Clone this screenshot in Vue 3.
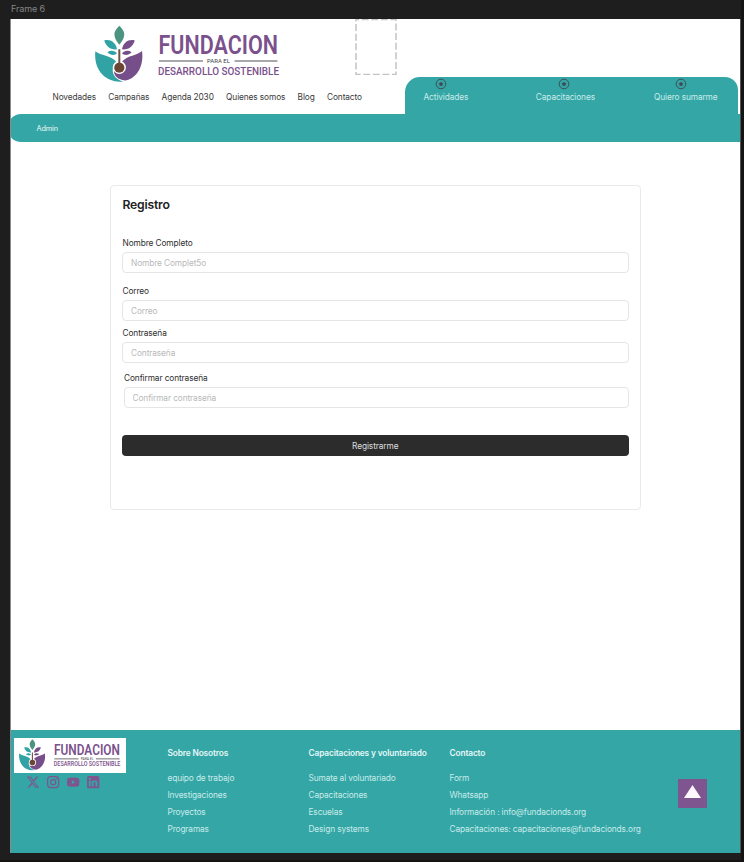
<script setup>
const nav = ['Novedades', 'Campañas', 'Agenda 2030', 'Quienes somos', 'Blog', 'Contacto']
const tabs = ['Actividades', 'Capacitaciones', 'Quiero sumarme']
const fields = [
  { id: 'nombre', label: 'Nombre Completo', hint: 'Nombre Complet5o', type: 'text' },
  { id: 'correo', label: 'Correo', hint: 'Correo', type: 'email' },
  { id: 'clave', label: 'Contraseña', hint: 'Contraseña', type: 'password' },
  { id: 'confirmar', label: 'Confirmar contraseña', hint: 'Confirmar contraseña', type: 'password' },
]
const columns = [
  { title: 'Sobre Nosotros', links: ['equipo de trabajo', 'Investigaciones', 'Proyectos', 'Programas'] },
  { title: 'Capacitaciones y voluntariado', links: ['Sumate al voluntariado', 'Capacitaciones', 'Escuelas', 'Design systems'] },
  { title: 'Contacto', links: ['Form', 'Whatsapp', 'Información : info@fundacionds.org', 'Capacitaciones: capacitaciones@fundacionds.org'] },
]
</script>

<template>
  <div class="canvas">
    <div class="frame-name">Frame 6</div>
    <svg class="defs" width="0" height="0">
      <symbol id="mark" viewBox="30 19 146 173">
        <path fill="#4b9480" d="M104 20C113 29 120 38 119 48C118 61 111 70 104 78C97 70 90 61 89 48C88 38 95 29 104 20Z" />
        <path fill="#31a3a4" d="M58 65C76 60 93 70 97 92C77 94 64 84 58 65Z" />
        <path fill="#764f8a" d="M151 65C133 60 116 70 112 92C132 94 145 84 151 65Z" />
        <path fill="#31a3a4" d="M68 101C79 93 90 96 97 104C90 111 77 111 68 101Z" />
        <path fill="#764f8a" d="M141 101C130 93 119 96 112 104C119 111 132 111 141 101Z" />
        <path fill="#31a3a4" d="M31 98C48 113 77 108 96 131L84 151C82 170 94 184 116 190C67 196 25 160 31 98Z" />
        <path fill="#764f8a" d="M173 97C157 112 131 109 112 129L88 155C86 171 98 183 121 187C154 184 180 145 173 97Z" />
        <circle cx="104" cy="147" r="20" fill="#fff" />
        <path stroke="#fff" stroke-width="12" d="M104 91V140" />
        <path stroke="#705044" stroke-width="6" d="M104 92V140" />
        <circle cx="104" cy="148" r="15.5" fill="#6c4635" />
      </symbol>
    </svg>

    <div class="page">
      <header class="header">
        <div class="left">
          <div class="brand-row">
            <svg class="logo" viewBox="0 0 185 58">
              <use href="#mark" x="0" y="0" width="48" height="57.5" />
              <text x="63.500" y="28.500" class="l1" textLength="119.500" lengthAdjust="spacingAndGlyphs">FUNDACION</text>
              <path d="M64 36H108M139.500 36H182.500" stroke="#55505a" stroke-width="1" />
              <text x="112" y="38" class="l2" textLength="23" lengthAdjust="spacingAndGlyphs">PARA EL</text>
              <text x="63" y="49.700" class="l3" textLength="121" lengthAdjust="spacingAndGlyphs">DESARROLLO SOSTENIBLE</text>
            </svg>
            <svg class="slot" viewBox="0 0 42 56">
              <rect x="1" y="0.500" width="40" height="55" fill="none" stroke="#c4c4c4" stroke-width="1.500" stroke-dasharray="7 2.600" stroke-dashoffset="4" />
            </svg>
          </div>
          <nav class="nav">
            <a v-for="n in nav" :key="n">{{ n }}</a>
          </nav>
        </div>
        <div class="tabs">
          <a v-for="t in tabs" :key="t" class="tab">
            <svg viewBox="0 0 12 12" class="star">
              <circle cx="6" cy="6" r="4.800" fill="none" stroke="#3f5058" stroke-width="1" />
              <path fill="#3f4650" d="M6 3.400L6.800 5L8.600 5.200L7.300 6.500L7.600 8.300L6 7.500L4.400 8.300L4.700 6.500L3.400 5.200L5.200 5Z" />
            </svg>
            <span>{{ t }}</span>
          </a>
        </div>
      </header>
      <div class="admin">Admin</div>

      <main class="main">
        <form class="card">
          <h1>Registro</h1>
          <div v-for="f in fields" :key="f.id" class="field" :class="f.id">
            <label :for="f.id">{{ f.label }}</label>
            <input :id="f.id" :type="f.type" :placeholder="f.hint" />
          </div>
          <button type="button" class="submit">Registrarme</button>
        </form>
      </main>

      <footer class="footer">
        <div class="social">
          <div class="logo-box">
            <svg class="logo logo-small" viewBox="0 0 185 58">
              <use href="#mark" x="0" y="0" width="48" height="57.5" />
              <text x="63.500" y="28.500" class="l1" textLength="119.500" lengthAdjust="spacingAndGlyphs">FUNDACION</text>
              <path d="M64 36H108M139.500 36H182.500" stroke="#55505a" stroke-width="1.500" />
              <text x="112" y="38" class="l2" textLength="23" lengthAdjust="spacingAndGlyphs">PARA EL</text>
              <text x="63" y="49.700" class="l3" textLength="121" lengthAdjust="spacingAndGlyphs">DESARROLLO SOSTENIBLE</text>
            </svg>
          </div>
          <div class="icons">
            <svg viewBox="0 0 24 24"><path fill="#7f5590" fill-rule="evenodd" d="M18.900 1H22.200L14 10.700L23.800 23H16.500L10.500 15.600L4 23H.7L9 13.200L-.2 1H7.300L12.700 7.900ZM17.600 21.200H19.800L6.300 2.700H3.800Z" /></svg>
            <svg viewBox="0 0 24 24" fill="none" stroke="#7f5590" stroke-width="2.300"><rect x="1.200" y="1.200" width="21.600" height="21.600" rx="6" /><circle cx="12" cy="12" r="5" /><circle cx="18" cy="6" r=".5" /></svg>
            <svg viewBox="0 0 24 24"><path fill="#7f5590" fill-rule="evenodd" d="M4 3.500Q12 2.700 20 3.500Q23.500 3.800 23.800 7.500Q24.300 12 23.800 16.500Q23.500 20.200 20 20.500Q12 21.300 4 20.500Q.5 20.200.2 16.500Q-.3 12 .2 7.500Q.5 3.800 4 3.500ZM9.500 8.300V15.700L16 12Z" /></svg>
            <svg viewBox="0 0 24 24"><rect width="24" height="24" rx="3" fill="#7f5590" /><path fill="#34a6a6" d="M3.700 9.200H7.200V20.300H3.700ZM9.300 9.200H12.700V10.800C13.500 9.500 14.800 8.900 16.200 8.900C19.500 8.900 20.300 11 20.300 14V20.300H16.800V14.700C16.800 13.300 16.700 11.900 15 11.900C13.300 11.900 12.800 13.200 12.800 14.600V20.300H9.300Z" /><circle cx="5.500" cy="5.500" r="2.100" fill="#34a6a6" /></svg>
          </div>
        </div>
        <div v-for="c in columns" :key="c.title" class="col">
          <h2>{{ c.title }}</h2>
          <a v-for="l in c.links" :key="l">{{ l }}</a>
        </div>
        <button type="button" class="up" aria-label="Subir">
          <svg viewBox="0 0 29 29"><path fill="#fdf6ff" d="M14.500 6L23 19H6Z" /></svg>
        </button>
      </footer>
    </div>
  </div>
</template>

<style>
body {
  background: #1e1e1e;
}
</style>

<style scoped>
.canvas {
  box-sizing: border-box;
  width: 744px;
  height: 862px;
  padding-left: 10px;
  background: #1e1e1e;
  border-right: 3px solid #141414;
  border-bottom: 2px solid #161313;
  overflow: hidden;
  font-family: Inter, sans-serif;
  font-size: 8.3px;
  letter-spacing: -0.1px;
  color: #3a3a3a;
}
.defs {
  display: block;
}
.frame-name {
  height: 19px;
  line-height: 17px;
  padding-left: 1px;
  font-size: 9px;
  color: #858585;
}
.page {
  box-sizing: border-box;
  width: 731px;
  height: 834px;
  display: flex;
  flex-direction: column;
  background: #fff;
  border-left: 1px solid #8a8a8a;
  border-right: 1px solid #555;
  overflow: hidden;
}
.header {
  display: flex;
  align-items: flex-end;
  height: 95px;
}
.left {
  width: 393.5px;
  height: 95px;
  flex: none;
}
.brand-row {
  display: flex;
  justify-content: space-between;
  height: 64px;
  padding: 0 8px 0 84px;
}
.logo {
  width: 185px;
  height: 58px;
  margin-top: 5.500px;
  overflow: visible;
  letter-spacing: 0;
}
.slot {
  width: 42px;
  height: 56px;
}
.l1,
.l3 {
  font-family: Roboto, sans-serif;
  fill: #7b518d;
}
.l1 {
  font-size: 25px;
  font-weight: 600;
}
.l2 {
  font-family: Roboto, sans-serif;
  font-size: 5px;
  font-weight: 400;
  fill: #444;
}
.l3 {
  font-size: 11.700px;
  font-weight: 500;
}
.nav {
  display: flex;
  gap: 12.300px;
  padding: 9px 0 0 41.500px;
  line-height: 11px;
  white-space: nowrap;
}
.tabs {
  box-sizing: border-box;
  width: 333.500px;
  height: 37px;
  display: flex;
  padding: 1px 0 0 19px;
  background: #34a6a6;
  border-radius: 15px 13px 0 0;
  color: #c9ebea;
  white-space: nowrap;
}
.tab {
  display: flex;
  flex-direction: column;
  align-items: center;
  line-height: 11px;
}
.tab:nth-child(1) {
  margin-right: 67.500px;
}
.tab:nth-child(2) {
  margin-right: 59px;
}
.star {
  width: 12px;
  height: 12px;
  margin: 0 10px 2px 0;
}
.tab:nth-child(2) .star {
  margin-right: 2px;
}
.admin {
  height: 27.500px;
  margin-left: -3px;
  padding-left: 28.500px;
  line-height: 29px;
  font-size: 7.300px;
  background: #34a6a6;
  border-radius: 13px 0 0 13px;
  color: #f0fafa;
}
.main {
  flex: 1;
  padding: 43.500px 0 0 99px;
}
.card {
  box-sizing: border-box;
  width: 530.500px;
  height: 325px;
  padding: 11px 11px 0;
  border: 1px solid #e9e9e9;
  border-radius: 4px;
}
h1 {
  margin: 0 0 24px 0.500px;
  font-size: 12.200px;
  letter-spacing: -0.200px;
  line-height: 16px;
  font-weight: 600;
  color: #222;
}
.field {
  display: flex;
  flex-direction: column;
  margin-bottom: 12px;
}
.field label {
  line-height: 12px;
  margin: 0 0 3px 0.500px;
  color: #2e2e2e;
}
.field input {
  box-sizing: border-box;
  width: 100%;
  height: 21px;
  padding: 0 8px;
  border: 1px solid #e5e5e5;
  border-radius: 4px;
  background: #fff;
  font: inherit;
  letter-spacing: inherit;
}
.field input::placeholder {
  color: #b8b8b8;
  opacity: 1;
}
.field.correo {
  margin-bottom: 6px;
}
.field.clave {
  margin-bottom: 9px;
}
.field.confirmar {
  margin: 0 0 27px 1.500px;
}
.submit {
  display: block;
  width: 100%;
  height: 21px;
  padding: 0;
  border: 0;
  border-radius: 4px;
  background: #2c2c2c;
  color: #dedede;
  font: inherit;
  letter-spacing: inherit;
}
.footer {
  box-sizing: border-box;
  height: 123px;
  display: grid;
  grid-template-columns: 153.500px 141px 141px 229px 29px;
  padding: 7.500px 0 0 3px;
  background: #34a6a6;
}
.logo-box {
  box-sizing: border-box;
  width: 112px;
  height: 35px;
  padding: 1.500px 0 0 5px;
  background: #fff;
}
.logo-small {
  display: block;
  width: 102px;
  height: 32px;
  margin: 0;
}
.icons {
  display: flex;
  gap: 7.900px;
  padding: 3.500px 0 0 12.500px;
}
.icons svg {
  width: 12.300px;
  height: 12.300px;
  overflow: visible;
}
.col {
  padding-top: 8px;
  white-space: nowrap;
  color: #c9ebea;
  letter-spacing: -0.120px;
}
h2 {
  margin: 0 0 10px;
  font-size: 8.300px;
  line-height: 14px;
  font-weight: 600;
  color: #e6f7f6;
}
.col a {
  display: block;
  line-height: 17.300px;
}
.up {
  width: 29px;
  height: 29px;
  margin-top: 41.500px;
  margin-left: -0.500px;
  padding: 0;
  border: 0;
  background: #7f5590;
}
.up svg {
  display: block;
  width: 29px;
  height: 29px;
}
</style>
